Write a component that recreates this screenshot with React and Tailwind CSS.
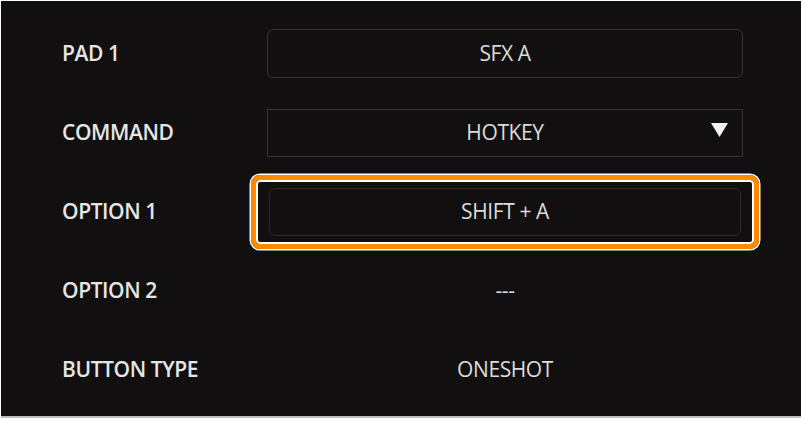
export default function App() {
  const label = "text-[21px] font-semibold text-[#e6e6e6] tracking-[-0.4px]";
  const value = "text-[21px] text-[#dcdcdc] tracking-[-0.4px]";
  return (
    <div className="w-[804px] h-[421px] bg-white" style={{ fontFamily: '"Open Sans", "Noto Sans", sans-serif' }}>
      <div className="ml-[1px] mt-[1px] w-[800px] h-[417px] bg-[#110f10] border-b-2 border-[#bdbdbd] pl-[61px] pt-[13px]">
        <div className="grid grid-cols-[205px_476px] auto-rows-[79px] items-center">
          <div className={label}>PAD 1</div>
          <div className="h-[49px] rounded-[6px] border border-[#333133] flex items-center justify-center">
            <span className={value}>SFX A</span>
          </div>

          <div className={label}>COMMAND</div>
          <div className="relative h-[48px] border border-[#353335] flex items-center justify-center">
            <span className={value}>HOTKEY</span>
            <svg className="absolute right-[14px] top-[13px]" width="17" height="15" viewBox="0 0 17 15">
              <polygon points="0,0 17,0 8.5,14" fill="#f2f2f2" />
            </svg>
          </div>

          <div className={label}>OPTION 1</div>
          <div className="relative h-[48px] mx-[2px]">
            <div className="h-full rounded-[6px] border border-[#2c2a2c] flex items-center justify-center">
              <span className={value}>SHIFT + A</span>
            </div>
            <div className="absolute -left-[18px] -right-[18px] -top-[13px] -bottom-[13px] rounded-[9px] border-[5px] border-[#ff8a00] shadow-[0_0_0_1.5px_#ffffff,inset_0_0_0_2px_#ffffff]" />
          </div>

          <div className={label}>OPTION 2</div>
          <div className="flex items-center justify-center">
            <span className={value}>---</span>
          </div>

          <div className={label}>BUTTON TYPE</div>
          <div className="flex items-center justify-center">
            <span className={value}>ONESHOT</span>
          </div>
        </div>
      </div>
    </div>
  );
}
